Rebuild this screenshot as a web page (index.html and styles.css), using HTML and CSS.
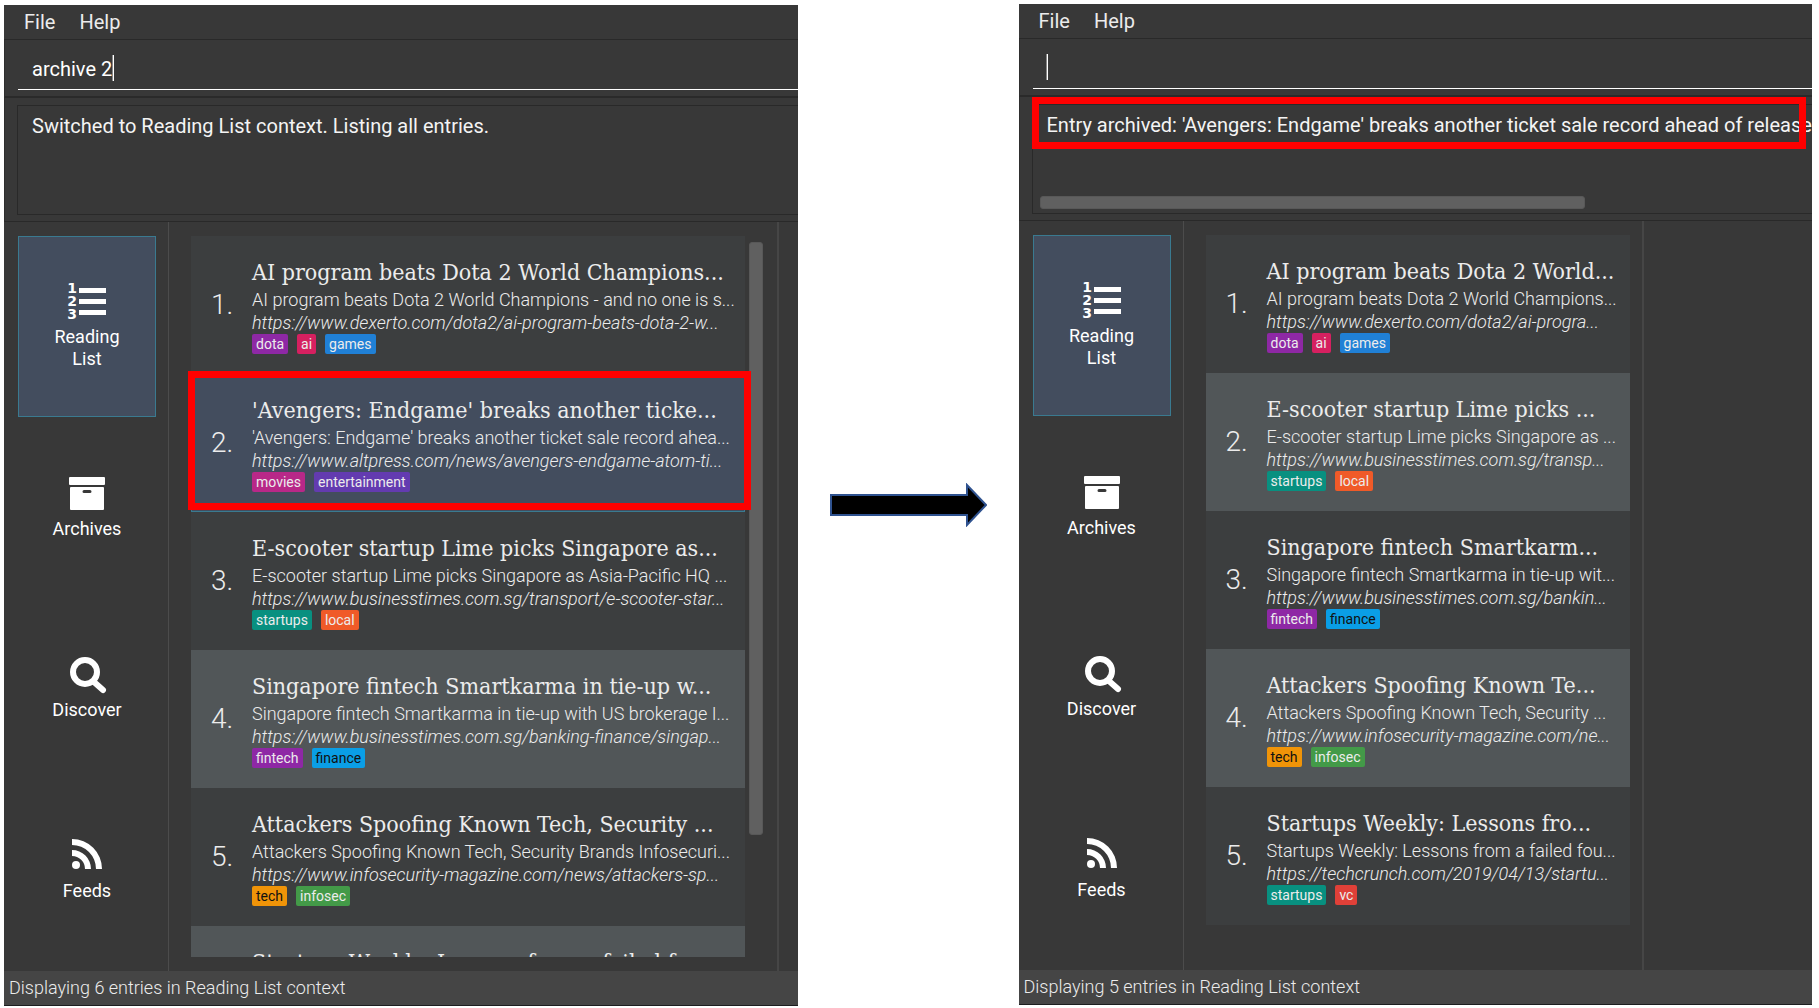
FILE: index.html
```html
<!DOCTYPE html>
<html lang="en">
<head>
<meta charset="utf-8">
<title>Archiving an entry</title>
<link rel="stylesheet" href="styles.css">
</head>
<body>
<svg class="symbols" aria-hidden="true">
  <symbol id="icon-archive" viewBox="0 0 42 42">
    <path d="M4 1h34a1 1 0 0 1 1 1v6a1 1 0 0 1-1 1H4a1 1 0 0 1-1-1V2a1 1 0 0 1 1-1z"/>
    <path fill-rule="evenodd" d="M5 11h32a1 1 0 0 1 1 1v21a1 1 0 0 1-1 1H5a1 1 0 0 1-1-1V12a1 1 0 0 1 1-1zM18 14a1 1 0 0 0 0 3h6a1 1 0 0 0 0-3z"/>
  </symbol>
  <symbol id="icon-search" viewBox="0 0 42 42">
    <circle class="stroke" cx="19" cy="15" r="12"/>
    <path class="stroke round" d="M28 25l9 8"/>
  </symbol>
  <symbol id="icon-rss" viewBox="0 0 42 42">
    <circle cx="10" cy="27" r="4"/>
    <path d="M6 1a30 30 0 0 1 30 30h-6A24 24 0 0 0 6 7zM6 12a19 19 0 0 1 19 19h-6A13 13 0 0 0 6 18z"/>
  </symbol>
</svg>

<main class="comparison">
  <section class="window before" aria-label="Before">
    <nav class="menu"><button>File</button><button>Help</button></nav>
    <div class="command">
      <input class="command-input" type="text" value="archive 2" aria-label="Command">
      <span class="caret after-text"></span>
    </div>
    <div class="result">
      <div class="result-box"><p class="message">Switched to Reading List context. Listing all entries.</p></div>
    </div>
    <div class="workspace">
      <nav class="contexts">
        <button class="context selected">
          <svg class="icon" viewBox="0 0 42 42" aria-hidden="true">
            <path d="M13 4h27v5H13zM13 15h27v5H13zM13 26h27v5H13z"/>
            <text class="digit" x="6" y="9">1</text>
            <text class="digit" x="6" y="22">2</text>
            <text class="digit" x="6" y="35">3</text>
          </svg>
          <span>Reading<br>List</span>
        </button>
        <button class="context"><svg class="icon"><use href="#icon-archive"/></svg><span>Archives</span></button>
        <button class="context"><svg class="icon"><use href="#icon-search"/></svg><span>Discover</span></button>
        <button class="context"><svg class="icon"><use href="#icon-rss"/></svg><span>Feeds</span></button>
      </nav>
      <div class="list-panel">
        <ol class="entries">
          <li class="entry">
            <span class="number">1.</span>
            <div class="details">
              <h2>AI program beats Dota 2 World Champions...</h2>
              <p>AI program beats Dota 2 World Champions - and no one is s...</p>
              <a href="#">https://www.dexerto.com/dota2/ai-program-beats-dota-2-w...</a>
              <div class="tags"><span class="tag purple">dota</span><span class="tag pink">ai</span><span class="tag blue">games</span></div>
            </div>
          </li>
          <li class="entry current">
            <span class="number">2.</span>
            <div class="details">
              <h2>'Avengers: Endgame' breaks another ticke...</h2>
              <p>'Avengers: Endgame' breaks another ticket sale record ahea...</p>
              <a href="#">https://www.altpress.com/news/avengers-endgame-atom-ti...</a>
              <div class="tags"><span class="tag magenta">movies</span><span class="tag violet">entertainment</span></div>
            </div>
          </li>
          <li class="entry">
            <span class="number">3.</span>
            <div class="details">
              <h2>E-scooter startup Lime picks Singapore as...</h2>
              <p>E-scooter startup Lime picks Singapore as Asia-Pacific HQ ...</p>
              <a href="#">https://www.businesstimes.com.sg/transport/e-scooter-star...</a>
              <div class="tags"><span class="tag teal">startups</span><span class="tag orange">local</span></div>
            </div>
          </li>
          <li class="entry">
            <span class="number">4.</span>
            <div class="details">
              <h2>Singapore fintech Smartkarma in tie-up w...</h2>
              <p>Singapore fintech Smartkarma in tie-up with US brokerage I...</p>
              <a href="#">https://www.businesstimes.com.sg/banking-finance/singap...</a>
              <div class="tags"><span class="tag purple">fintech</span><span class="tag sky">finance</span></div>
            </div>
          </li>
          <li class="entry">
            <span class="number">5.</span>
            <div class="details">
              <h2>Attackers Spoofing Known Tech, Security ...</h2>
              <p>Attackers Spoofing Known Tech, Security Brands Infosecuri...</p>
              <a href="#">https://www.infosecurity-magazine.com/news/attackers-sp...</a>
              <div class="tags"><span class="tag amber">tech</span><span class="tag green">infosec</span></div>
            </div>
          </li>
          <li class="entry">
            <span class="number"></span>
            <div class="details">
              <h2>Startups Weekly: Lessons from a failed fou...</h2>
            </div>
          </li>
        </ol>
        <div class="scroll-track"><div class="scroll-thumb"></div></div>
        <div class="highlight entry-highlight"></div>
      </div>
      <div class="viewer"></div>
    </div>
    <footer class="status">Displaying 6 entries in Reading List context</footer>
  </section>

  <svg class="arrow" viewBox="0 0 158 44" role="img" aria-label="becomes">
    <path d="M2 12h136V2l19 20-19 20V32H2z"/>
  </svg>

  <section class="window after" aria-label="After">
    <nav class="menu"><button>File</button><button>Help</button></nav>
    <div class="command">
      <input class="command-input" type="text" value="" aria-label="Command">
      <span class="caret"></span>
    </div>
    <div class="result">
      <div class="result-box">
        <p class="message">Entry archived: 'Avengers: Endgame' breaks another ticket sale record ahead of release</p>
        <div class="scroll-bar"></div>
        <div class="highlight message-highlight"></div>
      </div>
    </div>
    <div class="workspace">
      <nav class="contexts">
        <button class="context selected">
          <svg class="icon" viewBox="0 0 42 42" aria-hidden="true">
            <path d="M13 4h27v5H13zM13 15h27v5H13zM13 26h27v5H13z"/>
            <text class="digit" x="6" y="9">1</text>
            <text class="digit" x="6" y="22">2</text>
            <text class="digit" x="6" y="35">3</text>
          </svg>
          <span>Reading<br>List</span>
        </button>
        <button class="context"><svg class="icon"><use href="#icon-archive"/></svg><span>Archives</span></button>
        <button class="context"><svg class="icon"><use href="#icon-search"/></svg><span>Discover</span></button>
        <button class="context"><svg class="icon"><use href="#icon-rss"/></svg><span>Feeds</span></button>
      </nav>
      <div class="list-panel">
        <ol class="entries">
          <li class="entry">
            <span class="number">1.</span>
            <div class="details">
              <h2>AI program beats Dota 2 World...</h2>
              <p>AI program beats Dota 2 World Champions...</p>
              <a href="#">https://www.dexerto.com/dota2/ai-progra...</a>
              <div class="tags"><span class="tag purple">dota</span><span class="tag pink">ai</span><span class="tag blue">games</span></div>
            </div>
          </li>
          <li class="entry">
            <span class="number">2.</span>
            <div class="details">
              <h2>E-scooter startup Lime picks ...</h2>
              <p>E-scooter startup Lime picks Singapore as ...</p>
              <a href="#">https://www.businesstimes.com.sg/transp...</a>
              <div class="tags"><span class="tag teal">startups</span><span class="tag orange">local</span></div>
            </div>
          </li>
          <li class="entry">
            <span class="number">3.</span>
            <div class="details">
              <h2>Singapore fintech Smartkarm...</h2>
              <p>Singapore fintech Smartkarma in tie-up wit...</p>
              <a href="#">https://www.businesstimes.com.sg/bankin...</a>
              <div class="tags"><span class="tag purple">fintech</span><span class="tag sky">finance</span></div>
            </div>
          </li>
          <li class="entry">
            <span class="number">4.</span>
            <div class="details">
              <h2>Attackers Spoofing Known Te...</h2>
              <p>Attackers Spoofing Known Tech, Security ...</p>
              <a href="#">https://www.infosecurity-magazine.com/ne...</a>
              <div class="tags"><span class="tag amber">tech</span><span class="tag green">infosec</span></div>
            </div>
          </li>
          <li class="entry">
            <span class="number">5.</span>
            <div class="details">
              <h2>Startups Weekly: Lessons fro...</h2>
              <p>Startups Weekly: Lessons from a failed fou...</p>
              <a href="#">https://techcrunch.com/2019/04/13/startu...</a>
              <div class="tags"><span class="tag teal">startups</span><span class="tag red">vc</span></div>
            </div>
          </li>
        </ol>
      </div>
      <div class="viewer"></div>
    </div>
    <footer class="status">Displaying 5 entries in Reading List context</footer>
  </section>
</main>
</body>
</html>
```
FILE: styles.css
```css
* { box-sizing: border-box; }

body {
  margin: 0;
  background: #fff;
  font-family: Roboto, sans-serif;
}

button {
  padding: 0;
  border: 0;
  background: none;
  color: inherit;
  font: inherit;
}

h2, p, ol { margin: 0; padding: 0; font-weight: inherit; }

.symbols { position: absolute; width: 0; height: 0; }

.comparison {
  display: grid;
  grid-template-columns: 1fr 221px 1fr;
  height: 100vh;
  padding: 4px 7px 2px 4px;
}

.window {
  display: flex;
  flex-direction: column;
  min-width: 0;
  overflow: hidden;
  background: #383838;
  color: #fff;
  border-bottom: 1px solid #1d1d1f;
}

.before { margin-top: 1px; }
.after { margin-bottom: 1px; }

.menu {
  display: flex;
  gap: 24px;
  height: 35px;
  flex: none;
  padding: 0 20px;
  border-bottom: 1px solid #292929;
  color: #ececec;
  font-size: 19px;
  line-height: 35px;
}

.menu button { font-size: 20px; }

.command {
  position: relative;
  flex: none;
  height: 58px;
  padding-left: 13px;
  border-left: 1px solid #2e2e2e;
  border-bottom: 2px solid #2a2a2a;
}

.command-input {
  display: block;
  width: 100%;
  height: 50px;
  padding: 8px 14px 0;
  border: 0;
  border-bottom: 1px solid #fff;
  border-radius: 0;
  outline: 0;
  background: none;
  color: #fff;
  font: 20px Roboto, sans-serif;
}

.caret {
  position: absolute;
  top: 15px;
  left: 26px;
  width: 2px;
  height: 26px;
  background: linear-gradient(90deg, #888 50%, #fff 50%);
}

.caret.after-text { left: 107px; }

.result {
  flex: none;
  padding: 7px 0 6px 12px;
  border-left: 1px solid #2e2e2e;
  border-bottom: 1px solid #292929;
}

.result-box {
  position: relative;
  height: 110px;
  padding: 7px 0 4px 14px;
  border: 1px solid #292929;
  border-right: 0;
}

.message {
  overflow: hidden;
  white-space: nowrap;
  color: #f4f4f4;
  font-size: 20px;
  line-height: 26px;
}

.scroll-bar {
  position: absolute;
  bottom: 4px;
  left: 7px;
  width: 70%;
  height: 13px;
  border: 1px solid #585858;
  border-radius: 3px;
  background: #606060;
}

.highlight { position: absolute; border: 7px solid #f00; }
.message-highlight { top: -8px; left: -1px; right: 6px; height: 52px; }
.entry-highlight { top: 149px; left: 19px; right: 26px; height: 139px; }

.workspace { display: flex; flex: 1; min-height: 0; }

.contexts {
  flex: none;
  display: flex;
  flex-direction: column;
  width: 165px;
  padding: 14px 12px 0 14px;
  border-right: 1px solid #4c4c4c;
}

.context {
  display: flex;
  flex-direction: column;
  align-items: center;
  justify-content: center;
  height: 181px;
  border: 1px solid transparent;
  font-size: 18px;
  line-height: 22px;
}

.context.selected { background: #434d5e; border-color: #3a7a90; }

.icon { width: 42px; height: 42px; fill: #fff; overflow: visible; }
.digit { font: bold 14px "DejaVu Sans", sans-serif; text-anchor: middle; }
.stroke { fill: none; stroke: #fff; stroke-width: 6px; }
.round { stroke-linecap: round; }

.list-panel {
  position: relative;
  display: flex;
  gap: 4px;
  min-width: 0;
  padding: 14px 14px 14px 22px;
  border-right: 2px solid #464646;
}

.before .list-panel { flex: 0 0 610px; }
.after .list-panel { flex: 0 0 460px; padding-right: 12px; }

.entries {
  flex: 1;
  min-width: 0;
  min-height: 0;
  overflow: hidden;
  list-style: none;
}

.entry {
  display: flex;
  align-items: center;
  padding: 20px 0 20px 20px;
  background: #3c3e3f;
  color: #ececec;
}

.entry:nth-child(even) { background: #515658; }
.entry.current { background: #434d5e; box-shadow: inset 0 0 0 1px #3a7a90; }

.number { flex: none; width: 41px; font-size: 28px; font-weight: 300; line-height: 32px; }

.details { min-width: 0; white-space: nowrap; font-size: 18px; font-weight: 300; line-height: 23px; }

.details h2 {
  font-family: "Roboto Slab", "DejaVu Serif Condensed", "DejaVu Serif", serif;
  font-size: 23px;
  font-weight: 400;
  line-height: 32px;
}

.details a { display: block; color: inherit; font-style: italic; text-decoration: none; }

.tags { display: flex; gap: 9px; }

.tag {
  padding: 0 4px;
  border-radius: 2px;
  font-size: 14px;
  font-weight: 400;
  line-height: 20px;
}

.purple { background: #8e28a5; }
.pink { background: #d62060; }
.blue { background: #2080d6; }
.magenta { background: #b82888; }
.violet { background: #633bb0; }
.teal { background: #089080; }
.orange { background: #f05a28; }
.sky { background: #0a9ee6; color: #111; }
.amber { background: #f09408; color: #111; }
.green { background: #439a48; }
.red { background: #e04038; }

.scroll-track { flex: none; width: 14px; padding-top: 6px; }

.scroll-thumb {
  height: 83%;
  border: 1px solid #585858;
  border-radius: 3px;
  background: #606060;
}

.viewer { flex: 1; }

.status {
  flex: none;
  height: 34px;
  padding-left: 5px;
  background: #454545;
  color: #ececec;
  font-size: 18px;
  font-weight: 300;
  line-height: 34px;
}

.arrow {
  align-self: center;
  justify-self: center;
  width: 158px;
  height: 44px;
  fill: #000;
  stroke: #2f528f;
  stroke-width: 2px;
}
```
